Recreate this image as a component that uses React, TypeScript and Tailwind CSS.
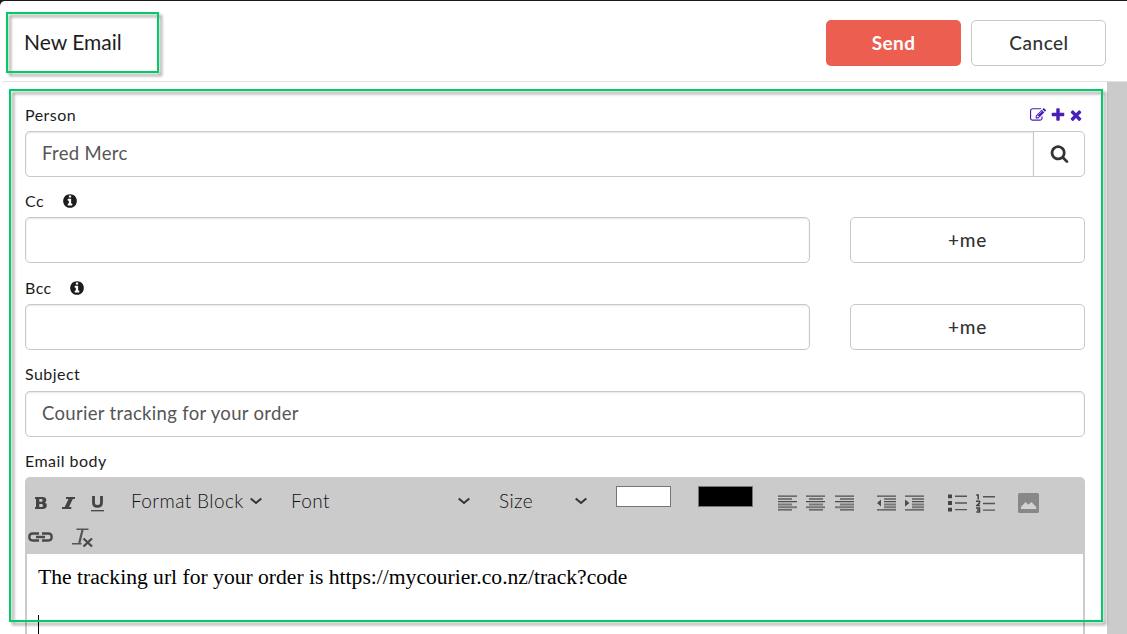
import type { ReactNode } from "react";

const iconPaths = {
  edit: "M888 1184l116-116-152-152-116 116v56h96v96h56zm440-720q-16-16-33 1l-350 350q-17 17-1 33t33-1l350-350q17-17 1-33zm80 594v190q0 119-84.5 203.5t-203.5 84.5h-832q-119 0-203.5-84.5t-84.5-203.5v-832q0-119 84.5-203.5t203.5-84.5h832q63 0 117 25 15 7 18 23 3 17-9 29l-49 49q-14 14-32 8-23-6-45-6h-832q-66 0-113 47t-47 113v832q0 66 47 113t113 47h832q66 0 113-47t47-113v-126q0-13 9-22l64-64q15-15 35-7t20 29zm-96-738l288 288-672 672h-288v-288zm444 132l-92 92-288-288 92-92q28-28 68-28t68 28l152 152q28 28 28 68t-28 68z",
  plus: "M1600 736v192q0 40-28 68t-68 28h-416v416q0 40-28 68t-68 28h-192q-40 0-68-28t-28-68v-416h-416q-40 0-68-28t-28-68v-192q0-40 28-68t68-28h416v-416q0-40 28-68t68-28h192q40 0 68 28t28 68v416h416q40 0 68 28t28 68z",
  times:
    "M1490 1322q0 40-28 68l-136 136q-28 28-68 28t-68-28l-294-294-294 294q-28 28-68 28t-68-28l-136-136q-28-28-28-68t28-68l294-294-294-294q-28-28-28-68t28-68l136-136q28-28 68-28t68 28l294 294 294-294q28-28 68-28t68 28l136 136q28 28 28 68t-28 68l-294 294 294 294q28 28 28 68z",
  search:
    "M1216 832q0-185-131.5-316.5t-316.5-131.5-316.5 131.5-131.5 316.5 131.5 316.5 316.5 131.5 316.5-131.5 131.5-316.5zm512 832q0 52-38 90t-90 38q-54 0-90-38l-343-342q-179 124-399 124-143 0-273.5-55.5t-225-150-150-225-55.5-273.5 55.5-273.5 150-225 225-150 273.5-55.5 273.5 55.5 225 150 150 225 55.5 273.5q0 220-124 399l343 343q37 37 37 90z",
  info: "M1152 1376v-160q0-14-9-23t-23-9h-96v-512q0-14-9-23t-23-9h-320q-14 0-23 9t-9 23v160q0 14 9 23t23 9h96v320h-96q-14 0-23 9t-9 23v160q0 14 9 23t23 9h448q14 0 23-9t9-23zm-128-896v-160q0-14-9-23t-23-9h-192q-14 0-23 9t-9 23v160q0 14 9 23t23 9h192q14 0 23-9t9-23zm640 416q0 209-103 385.5t-279.5 279.5-385.5 103-385.5-103-279.5-279.5-103-385.5 103-385.5 279.5-279.5 385.5-103 385.5 103 279.5 279.5 103 385.5z",
};

function Icon({ name, className }: { name: keyof typeof iconPaths; className: string }) {
  return (
    <svg viewBox="0 0 1792 1792" fill="currentColor" className={className}>
      <path d={iconPaths[name]} />
    </svg>
  );
}

function Label({ children, className }: { children: ReactNode; className: string }) {
  return (
    <div className={`flex h-8 shrink-0 items-center text-base tracking-[0.45px] text-[#1c1c1c] ${className}`}>
      {children}
    </div>
  );
}

function CopyRow() {
  return (
    <div className="flex h-[46px] shrink-0 gap-10">
      <input className="w-[785px] rounded-[5px] border border-[#c8c8c8] shadow-[inset_0_1px_2px_rgba(0,0,0,0.1)]" />
      <button className="flex-1 rounded-[5px] border border-[#c8c8c8] text-[19px] font-medium tracking-[0.8px] text-[#333]">
        +me
      </button>
    </div>
  );
}

function Select({ label, className }: { label: string; className: string }) {
  return (
    <button className={`flex items-center justify-between text-[19px] font-light tracking-[0.4px] text-[#111] ${className}`}>
      <span>{label}</span>
      <svg viewBox="0 0 12 8" className="h-2 w-3" fill="none" stroke="#333" strokeWidth="2">
        <path d="M.7 1.500L6 6l5.300-4.500" />
      </svg>
    </button>
  );
}

const shortLineStart = { left: 0, center: 3, right: 5 };

function Align({ side, className }: { side: keyof typeof shortLineStart; className: string }) {
  const x = shortLineStart[side];
  return (
    <svg viewBox="0 0 19 16" className={`h-4 w-[19px] ${className}`}>
      <path stroke="#4d4d4d" strokeWidth="1.300" d={`M0 1.200h19M0 6.700h19M${x} 14.800h14`} />
      <path stroke="#777" strokeWidth="2" d={`M${x} 4h14M${x} 9.500h14M0 12.200h19`} />
    </svg>
  );
}

function Indent({ out, className }: { out?: boolean; className: string }) {
  return (
    <svg viewBox="0 0 19 16" className={`h-4 w-[19px] ${className}`}>
      <path stroke="#4d4d4d" strokeWidth="1.300" d="M0 1.200h19M7 6.700h12M0 14.800h19" />
      <path stroke="#777" strokeWidth="2" d="M7 4h12M7 9.500h12M7 12.200h12" />
      <path fill="#4d4d4d" d={out ? "M4 4.500v7L0 8z" : "M0 4.500v7L4.500 8z"} />
    </svg>
  );
}

function Toolbar() {
  return (
    <div className="h-[77px] shrink-0 rounded-t-[5px] bg-[#cbcbcb]">
      <div className="flex h-[46px] items-center pt-[2px] text-[#444]">
        <svg viewBox="0 0 12 12" className="mt-1 ml-[10px] h-3 w-3" fill="#444" fillRule="evenodd">
          <path d="M0 0h7.500c2.400 0 3.800 1.100 3.800 3 0 1.300-.6 2.100-1.600 2.600 1.300.4 2.100 1.400 2.100 2.900 0 2.300-1.600 3.500-4.300 3.500H0v-2h1V2H0zM4.300 2.100v2.700h1.800c1 0 1.500-.5 1.500-1.400s-.5-1.300-1.500-1.300zM4.300 6.900v3h2c1.100 0 1.600-.5 1.600-1.500s-.5-1.500-1.600-1.500z" />
        </svg>
        <svg viewBox="0 0 13 12" className="mt-1 ml-[15px] h-3 w-[13px]" fill="#444">
          <path d="M4 0h9v2h-2.200L7 10h2.300v2H0v-2h2.700L6.500 2H4z" />
        </svg>
        <svg viewBox="0 0 13 16" className="mt-[6px] ml-[16px] h-4 w-[13px]" fill="none" stroke="#444">
          <path strokeWidth="2.800" d="M2.500 0v6.500c0 2.600 1.400 3.900 4 3.900s4-1.300 4-3.900V0" />
          <path strokeWidth="1.300" d="M0 14.700h13" />
        </svg>
        <Select label="Format Block" className="ml-[27px] w-[131px]" />
        <Select label="Font" className="ml-[29px] w-[179px]" />
        <Select label="Size" className="ml-[29px] w-[88px]" />
        <div className="mb-[9px] ml-[29px] h-[21px] w-[55px] border border-[#767676] bg-white" />
        <div className="mb-[9px] ml-[27px] h-[21px] w-[55px] border border-[#767676] bg-black" />
        <Align side="left" className="mt-1 ml-[25px]" />
        <Align side="center" className="mt-1 ml-[9px]" />
        <Align side="right" className="mt-1 ml-[10px]" />
        <Indent out className="mt-1 ml-[23px]" />
        <Indent className="mt-1 ml-[9px]" />
        <svg viewBox="0 0 19 18" className="mt-1 ml-[24px] h-[18px] w-[19px]">
          <path fill="#444" d="M0 .5h4v3.700H0zM0 7.100h4v3.800H0zM0 13.700h4v3.800H0z" />
          <path stroke="#555" strokeWidth="1.400" d="M7 2.300h12M7 9h12M7 15.600h12" />
        </svg>
        <svg viewBox="0 0 19 19" className="mt-1 ml-[9px] h-[19px] w-[19px]" fill="none">
          <path stroke="#444" strokeWidth="1.500" d="M.2 1h2v4.600M0 7.200h3.500v1.800L.8 11.600H4M0 14h3.500v4H.3M1 16h2.500" />
          <path stroke="#555" strokeWidth="1.400" d="M7 2.800h12M7 9.500h12M7 16.100h12" />
        </svg>
        <svg viewBox="0 0 21 20" className="mt-1 ml-[23px] h-5 w-[21px]">
          <rect width="21" height="20" rx="1.500" fill="#888" />
          <path fill="#d2d2d2" d="M3 16v-2l4.500-5 2.800 2.800L13.500 9l4.700 5v2z" />
        </svg>
      </div>
      <div className="flex h-[28px] items-center">
        <svg viewBox="0 0 25 10" className="ml-[3px] h-[10px] w-[25px]" fill="none" stroke="#4a4a4a" strokeWidth="2.300">
          <path d="M11 1.500H4.700C2.600 1.500 1.300 2.800 1.300 5s1.300 3.500 3.400 3.500H11M14 1.500h6.300c2.100 0 3.400 1.300 3.400 3.500s-1.300 3.500-3.400 3.500H14M8 5h9" />
        </svg>
        <svg viewBox="0 0 21 20" className="mt-px ml-[19px] h-5 w-[21px]" fill="none" stroke="#555">
          <path strokeWidth="1.500" d="M4.500 1.200h12M0 15.800h9.500" />
          <path strokeWidth="2.200" d="M10.700 1.200L7.300 15" />
          <path stroke="#4a4a4a" strokeWidth="2.300" d="M11.500 10.500l8.500 8M20 10.500l-8.500 8" />
        </svg>
      </div>
    </div>
  );
}

export default function App() {
  return (
    <div className="relative h-[634px] w-[1127px] overflow-hidden bg-[#1c1a1c] pt-px font-['Lato','Liberation_Sans',sans-serif]">
      <div className="flex h-[633px] flex-col rounded-tl-[5px] bg-white">
        <header className="ml-[3px] flex h-[81px] shrink-0 items-start border-b border-[#e2e2e2] pt-[19px] pr-[21px] pl-[21px]">
          <h1 className="flex-1 text-[21px] leading-[43px] text-[#1c1c1c]">New Email</h1>
          <button className="h-[46px] w-[135px] rounded-[5px] bg-[#ec5e50] text-[19px] font-bold tracking-[0.4px] text-white">
            Send
          </button>
          <button className="ml-[10px] h-[46px] w-[135px] rounded-[5px] border border-[#c8c8c8] pl-px text-[19px] font-medium tracking-[0.5px] text-[#333]">
            Cancel
          </button>
        </header>

        <div className="flex min-h-0 flex-1">
          <main className="flex flex-1 flex-col pt-[17px] pr-[22px] pl-[25px]">
            <Label className="justify-between">
              <span>Person</span>
              <span className="flex items-center pr-[1px] text-[#4a1fb8]">
                <Icon name="edit" className="h-4 w-4" />
                <Icon name="plus" className="ml-1 h-4 w-4" />
                <Icon name="times" className="ml-[2px] h-4 w-4" />
              </span>
            </Label>
            <div className="flex h-[46px] shrink-0 rounded-[5px] border border-[#c8c8c8]">
              <div className="flex flex-1 items-center rounded-l-[4px] pl-4 text-[18.5px] tracking-[0.32px] text-[#555] shadow-[inset_0_1px_2px_rgba(0,0,0,0.1)]">
                Fred Merc
              </div>
              <button className="flex w-[51px] items-center justify-center border-l border-[#c8c8c8] pb-[2px] text-[#333]">
                <Icon name="search" className="h-[19px] w-[19px]" />
              </button>
            </div>

            <Label className="mt-2">
              Cc <Icon name="info" className="ml-[18px] h-4 w-4" />
            </Label>
            <CopyRow />

            <Label className="mt-[9px]">
              Bcc <Icon name="info" className="ml-[17px] h-4 w-4" />
            </Label>
            <CopyRow />

            <Label className="mt-[9px] pb-[2px]">Subject</Label>
            <div className="flex h-[46px] shrink-0 items-center rounded-[5px] border border-[#c8c8c8] pl-4 text-[18.5px] tracking-[0.32px] text-[#555] shadow-[inset_0_1px_2px_rgba(0,0,0,0.1)]">
              Courier tracking for your order
            </div>

            <Label className="mt-2">Email body</Label>
            <Toolbar />
            <div className="flex-1 border-x-2 border-[#cbcbcb] pt-[11px] pl-[11px] font-['Liberation_Serif',serif] text-[21.6px] leading-[25px] text-black">
              <p>The tracking url for your order is https://mycourier.co.nz/track?code</p>
              <div className="mt-[25px] h-6 w-px bg-black" />
            </div>
          </main>
          <div className="w-5 bg-[#cbcbcb]" />
        </div>
      </div>

      {/* callout frames */}
      <div className="pointer-events-none absolute top-[12px] left-[6px] h-[61px] w-[153px] border-2 border-[#00cc66] drop-shadow-[3px_3px_1.5px_rgba(0,0,0,0.4)]" />
      <div className="pointer-events-none absolute top-[89px] left-[9px] h-[533px] w-[1094px] border-2 border-[#00cc66] drop-shadow-[3px_3px_1.5px_rgba(0,0,0,0.4)]" />
    </div>
  );
}
